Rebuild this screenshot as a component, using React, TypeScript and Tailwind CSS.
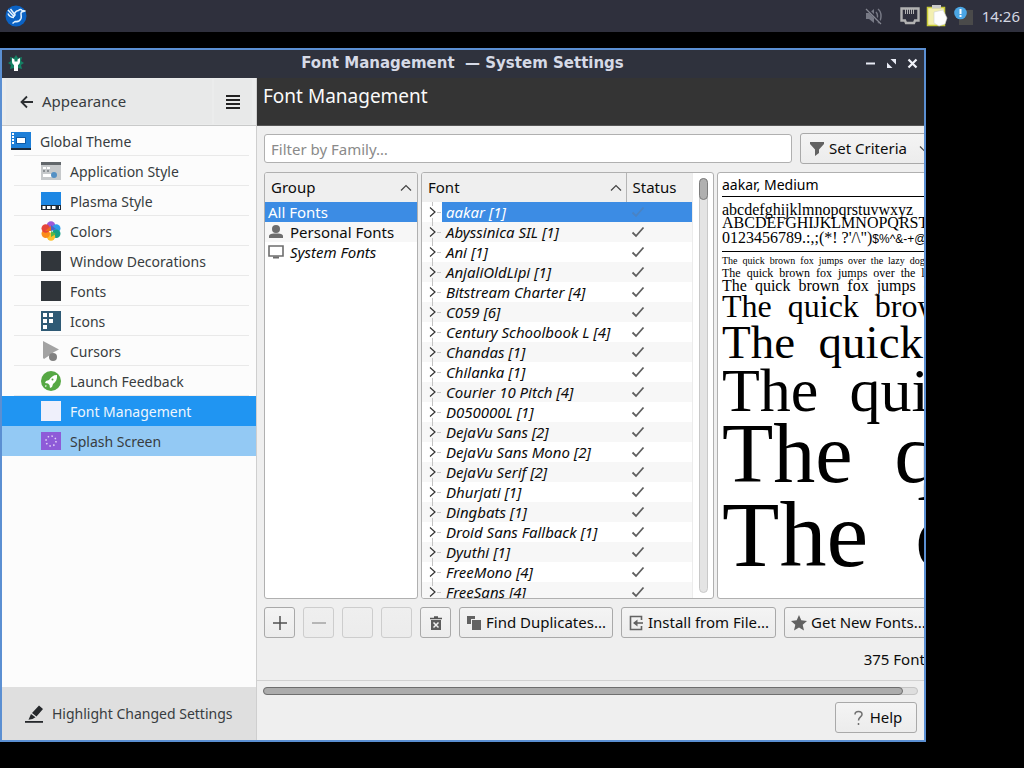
import React from "react";
import clsx from "clsx";

type IconName =
  | "theme"
  | "appstyle"
  | "plasma"
  | "colors"
  | "dark"
  | "icons"
  | "cursors"
  | "launch"
  | "light"
  | "splash";

interface NavItem {
  label: string;
  icon: IconName;
  state?: "active" | "hover";
}

const navItems: NavItem[] = [
  { label: "Application Style", icon: "appstyle" },
  { label: "Plasma Style", icon: "plasma" },
  { label: "Colors", icon: "colors" },
  { label: "Window Decorations", icon: "dark" },
  { label: "Fonts", icon: "dark" },
  { label: "Icons", icon: "icons" },
  { label: "Cursors", icon: "cursors" },
  { label: "Launch Feedback", icon: "launch" },
  { label: "Font Management", icon: "light", state: "active" },
  { label: "Splash Screen", icon: "splash", state: "hover" },
];

const fonts = [
  "aakar [1]",
  "Abyssinica SIL [1]",
  "Ani [1]",
  "AnjaliOldLipi [1]",
  "Bitstream Charter [4]",
  "C059 [6]",
  "Century Schoolbook L [4]",
  "Chandas [1]",
  "Chilanka [1]",
  "Courier 10 Pitch [4]",
  "D050000L [1]",
  "DejaVu Sans [2]",
  "DejaVu Sans Mono [2]",
  "DejaVu Serif [2]",
  "Dhurjati [1]",
  "Dingbats [1]",
  "Droid Sans Fallback [1]",
  "Dyuthi [1]",
  "FreeMono [4]",
  "FreeSans [4]",
];

const pangram = "The  quick  brown  fox  jumps  over  the  lazy  dog";

const samples = [
  "text-[10px] leading-[12px]",
  "text-[12px] leading-[12px]",
  "text-[16px] leading-[14px]",
  "text-[32px] leading-[26px]",
  "text-[47px] leading-[46px]",
  "text-[62px] leading-[50px]",
  "text-[84px] leading-[78px]",
  "text-[94px] leading-[82px]",
];

const NavIcon: React.FC<{ name: IconName }> = ({ name }) => (
  <svg viewBox="0 0 20 20" className="size-5 shrink-0" aria-hidden="true">
    {name === "theme" && (
      <>
        <path fill="#1d7fd8" d="M0 1h20v18H0z" />
        <path fill="#1b2b3d" d="M0 17h20v2H0z" />
        <path fill="#fff" d="M1 2h2v2H1zM1 5h2v2H1zM1 8h2v2H1zM1 11h2v2H1zM6 7h8v5H6z" />
        <path fill="none" stroke="#0f5ba5" d="M5.500 6.500h9v6h-9z" />
      </>
    )}
    {name === "appstyle" && (
      <>
        <path fill="#c6c9cb" d="M0 1h20v18H0z" />
        <path fill="#62676b" d="M0 1h20v3H0z" />
        <path fill="#fff" d="M2 6h3v2H2zM6 6h3v2H6zM2 13h9v3H2z" />
        <path fill="#8b9094" d="M2 9h2v2H2zM6 9h2v2H6z" />
        <circle cx="13" cy="14" r="3" fill="#5490c4" />
      </>
    )}
    {name === "plasma" && (
      <>
        <path fill="#1d87e4" d="M0 1h20v14H0z" />
        <path fill="#1f2c3a" d="M0 14h20v5H0z" />
        <path fill="#fff" d="M1.500 15h3v3h-3zM6 15h3.500v3H6zM11 15h3.500v3H11zM18 15h1v3h-1z" />
      </>
    )}
    {name === "colors" && (
      <>
        <circle cx="10" cy="4.500" r="4.200" fill="#9b59d6" />
        <circle cx="15.300" cy="7.500" r="4.200" fill="#2f9ce8" />
        <circle cx="15.300" cy="12.800" r="4.200" fill="#16a085" />
        <circle cx="10" cy="15.600" r="4.200" fill="#fbc02d" />
        <circle cx="4.700" cy="12.800" r="4.200" fill="#fb8c1a" />
        <circle cx="4.700" cy="7.500" r="4.200" fill="#e6453a" />
        <path fill="#ee6a1f" d="M4 10l6-5v5z" />
        <path fill="#4d64c8" d="M10 4l5 4-5 2z" />
        <path fill="#57b947" d="M10 10l5 3-5 3z" />
      </>
    )}
    {name === "dark" && <path fill="#31363b" d="M0 0h20v20H0z" />}
    {name === "light" && <path fill="#eff0fb" d="M0 0h20v20H0z" />}
    {name === "icons" && (
      <>
        <path fill="#2f5a75" d="M0 0h20v20H0z" />
        <path fill="#fff" d="M2 2h4v4H2zM8 2h4v4H8zM2 8h4v4H2zM8 8h4v4H8zM2 14h4v4H2z" />
      </>
    )}
    {name === "cursors" && (
      <>
        <path fill="#a3a3a3" d="M2 0l16 8.500-2 1-3 1.500-4 3-6 4-1-1z" />
        <circle cx="12" cy="16" r="4" fill="#808080" />
      </>
    )}
    {name === "launch" && (
      <>
        <circle cx="10" cy="10" r="10" fill="#56a844" />
        <path fill="#fff" d="M16 4c-4 0-6 2-8 5l-3 1-1 2 3 .5 1.500 1.500.5 3 2-1 1-3c3-2 4.500-5 4-9z" />
        <circle cx="11.500" cy="8.500" r="1" fill="#56a844" />
        <path fill="#fff" d="M4.500 14l1.500 1-2 1z" />
      </>
    )}
    {name === "splash" && (
      <>
        <path fill="#8e5bd8" d="M0 1h20v18H0z" />
        <circle cx="10" cy="10" r="5" fill="none" stroke="#e2d3f7" strokeWidth="1.500" strokeDasharray="1.500 2.400" />
      </>
    )}
  </svg>
);

const Check: React.FC<{ faded?: boolean }> = ({ faded }) => (
  <svg viewBox="0 0 14 12" className="h-3 w-3.5" aria-label="Enabled">
    <path d="M1.500 6.500L5 10l7.500-8.500" fill="none" stroke={faded ? "#4a83c4" : "#5f5f5f"} strokeWidth="1.800" />
  </svg>
);

const SortArrow: React.FC = () => (
  <svg viewBox="0 0 12 8" className="h-2 w-3" aria-hidden="true">
    <path d="M1 6.500l5-5 5 5" fill="none" stroke="#444" strokeWidth="1.200" />
  </svg>
);

interface ToolButtonProps extends React.ButtonHTMLAttributes<HTMLButtonElement> {
  children?: React.ReactNode;
}

const ToolButton: React.FC<ToolButtonProps> = ({ children, className, ...rest }) => (
  <button
    type="button"
    className={clsx(
      "flex h-[31px] shrink-0 items-center rounded-[3px] border border-[#a9a9a9] bg-gradient-to-b from-[#f4f4f4] to-[#ececec] whitespace-nowrap disabled:border-[#cdcdcd] disabled:from-[#efefef]",
      className
    )}
    {...rest}
  >
    {children}
  </button>
);

const Taskbar: React.FC = () => (
  <header className="flex h-8 shrink-0 items-center justify-between bg-[#2f303d] pr-1 pl-[5px]">
    <button type="button" aria-label="Application menu">
      <svg viewBox="0 0 22 22" className="size-[22px]">
        <circle cx="11" cy="11" r="10.500" fill="#0b62c4" />
        <path
          d="M3 5l6 6.500M5.500 4l5 6.500M3 8.500c1 2.500 3 4 6 4M9 12c0-4 1.500-6 4.500-6.500 1.500-1.500 3-1 3.500 0l3 .5-3.500 1c-1.500 2 .5 3.500-.5 6.500-1 2.500-3 3.500-6 3l-2.500 2"
          fill="none"
          stroke="#e3f2ff"
          strokeWidth="1.500"
          strokeLinejoin="round"
        />
      </svg>
    </button>
    <div className="flex items-center">
      <svg viewBox="0 0 18 18" className="mr-[17px] size-[18px]" aria-label="Muted">
        <path d="M1 6h3l5-4v14l-5-4H1z" fill="#777985" />
        <path d="M11 5c2 2 2 6 0 8M13 2c4 3 4 11 0 14" fill="none" stroke="#777985" strokeWidth="1.500" />
        <path d="M1 1l16 16" stroke="#2f303d" strokeWidth="2.500" />
        <path d="M1 2l15 15" stroke="#858792" strokeWidth="1.300" />
      </svg>
      <svg viewBox="0 0 20 18" className="mr-1.5 h-[18px] w-5" aria-label="Network">
        <path d="M1.500 1.500h17v12h-3.500l-1 2.500H6l-1-2.500H1.500z" fill="none" stroke="#b2b2b2" strokeWidth="2.400" />
        <path d="M5.500 2v5M7.500 2v5M9.500 2v5M11.500 2v5M13.500 2v5" stroke="#b2b2b2" />
      </svg>
      <svg viewBox="0 0 22 22" className="mr-1.5 size-[22px]" aria-label="Clipboard">
        <path d="M1.500 2.500h17v18h-17z" fill="#f3efb0" stroke="#c9cc38" strokeWidth="1.500" />
        <path d="M6 0h9v3.500H6z" fill="#c9c9c9" />
        <path d="M8 7l9-2 4 8-2 6-6 2-5-3z" fill="#fdfdfd" stroke="#d0d0d0" strokeWidth=".6" />
      </svg>
      <svg viewBox="0 0 20 20" className="mr-2 size-5" aria-label="Notifications">
        <path d="M7 4h12v15H5V13z" fill="#4a4a4a" />
        <circle cx="6.500" cy="7" r="6.300" fill="#4ba6e4" />
        <path d="M5.500 3h2v5h-2zM5.500 9h2v2h-2z" fill="#fff" />
      </svg>
      <time className="text-[15px] text-[#d4d7e2]">14:26</time>
    </div>
  </header>
);

const TitleBar: React.FC = () => (
  <div className="flex h-7 shrink-0 items-center bg-[#2f323d] px-[5px] pb-0.5 text-[#d6dae6]">
    <svg viewBox="0 0 18 18" className="size-[18px]" aria-hidden="true">
      <path d="M9 1l2 3 4-1-1 4 3 2-3 2 1 4-4-1-2 3-2-3-4 1 1-4-3-2 3-2-1-4 4 1z" fill="#158064" />
      <path d="M5 4v3.500c0 2 1 3 2 3.500v6h4v-6c1-.5 2-1.500 2-3.500V4l-2.500 1.500v2h-3v-2z" fill="#fff" />
    </svg>
    <h1 className="flex-1 pl-9 text-center font-['DejaVu_Sans',sans-serif] text-[15px] font-bold whitespace-pre">
      {"Font Management  — System Settings"}
    </h1>
    <div className="flex items-center gap-2">
      <button type="button" aria-label="Minimize">
        <svg viewBox="0 0 13 13" className="size-[13px]">
          <path d="M2 6.500h9" stroke="#e8ebf5" strokeWidth="2" />
        </svg>
      </button>
      <button type="button" aria-label="Restore">
        <svg viewBox="0 0 13 13" className="size-[13px]">
          <path d="M5.500 2H11v5.500zM2 5.500V11h5.500z" fill="#e8ebf5" />
          <path d="M2 2l9 9" stroke="#2f323d" />
        </svg>
      </button>
      <button type="button" aria-label="Close">
        <svg viewBox="0 0 13 13" className="size-[13px]">
          <path d="M2.500 2.500l8 8M10.500 2.500l-8 8" stroke="#f1f3fa" strokeWidth="2.200" />
        </svg>
      </button>
    </div>
  </div>
);

const Sidebar: React.FC = () => (
  <aside className="flex w-[255px] shrink-0 flex-col border-r border-[#cfcfcf] bg-[#fcfcfc] text-[#383c40]">
    <div className="flex h-12 shrink-0 border-b border-[#c9caca] bg-[#ebecec]">
      <button type="button" className="my-px ml-1 flex flex-1 items-center gap-2 bg-[#e8e9e9] pl-3.5 text-[15px]">
        <svg viewBox="0 0 14 14" className="size-3.5" aria-hidden="true">
          <path d="M7 1.500L1.500 7 7 12.500M1.500 7H13" fill="none" stroke="#2c2f32" strokeWidth="1.800" />
        </svg>
        Appearance
      </button>
      <button type="button" aria-label="Menu" className="my-px mr-1 ml-0.5 flex w-[38px] items-center justify-center bg-[#e8e9e9]">
        <svg viewBox="0 0 14 14" className="size-3.5">
          <path d="M0 1h14M0 5h14M0 9h14M0 13h14" stroke="#222" strokeWidth="1.800" />
        </svg>
      </button>
    </div>
    <nav className="flex-1">
      <button type="button" className="relative flex h-[30px] w-full items-center gap-[9px] pl-[9px] after:absolute after:right-[7px] after:bottom-0 after:left-3 after:h-px after:bg-[#e9e9e9]">
        <NavIcon name="theme" />
        Global Theme
      </button>
      <ul>
        {navItems.map((item) => (
          <li key={item.label}>
            <button
              type="button"
              className={clsx(
                "relative flex h-[30px] w-full items-center gap-[9px] pl-[39px]",
                item.state === "active" && "bg-[#2095f2] text-[#eef6fd]",
                item.state === "hover" && "bg-[#93c9f4]",
                !item.state &&
                  "after:absolute after:right-[7px] after:bottom-0 after:left-3 after:h-px after:bg-[#e9e9e9]"
              )}
            >
              <NavIcon name={item.icon} />
              {item.label}
            </button>
          </li>
        ))}
      </ul>
    </nav>
    <button type="button" className="flex h-[53px] shrink-0 items-center gap-2 bg-[#dfdfdf] pl-[22px]">
      <svg viewBox="0 0 20 20" className="size-5" aria-hidden="true">
        <path d="M1 17h18v1.800H1z" fill="#26292c" />
        <path d="M15 1.500l4 3.500-6.500 7.500-4.500-3.500zM7 10l4.500 3.200-3 1.800-4 .8z" fill="#26292c" />
      </svg>
      Highlight Changed Settings
    </button>
  </aside>
);

const GroupList: React.FC = () => (
  <section className="flex w-[154px] shrink-0 flex-col overflow-hidden rounded-[3px] border border-[#b0b0b0] bg-white">
    <button type="button" className="flex h-[29px] shrink-0 items-center justify-between bg-[#efefef] pr-[5px] pl-1.5">
      Group
      <SortArrow />
    </button>
    <ul className="leading-5">
      <li className="bg-[#3c8ce4] pl-[3px] text-white">All Fonts</li>
      <li className="flex items-center gap-1.5 bg-[#f7f7f7] pl-[3px]">
        <svg viewBox="0 0 16 16" className="size-4" aria-hidden="true">
          <circle cx="8" cy="5" r="4" fill="#6d6d6d" />
          <path d="M1 14v-2c0-1.500 2-2.500 5-2.500h4c3 0 5 1 5 2.500v2z" fill="#6d6d6d" />
        </svg>
        Personal Fonts
      </li>
      <li className="flex items-center gap-1.5 pl-[3px] italic">
        <svg viewBox="0 0 16 16" className="size-4" aria-hidden="true">
          <path d="M1 2h14v10H1z" fill="none" stroke="#6d6d6d" strokeWidth="1.600" />
          <path d="M5 12.500h6v2H5z" fill="#6d6d6d" />
        </svg>
        System Fonts
      </li>
    </ul>
  </section>
);

const FontTable: React.FC = () => (
  <section className="flex w-[293px] shrink-0 overflow-hidden rounded-[3px] border border-[#b0b0b0] bg-white">
    <div className="min-w-0 flex-1 overflow-hidden">
      <table className="w-full table-fixed border-collapse">
        <thead>
          <tr className="h-[29px] bg-[#efefef]">
            <th scope="col" className="border-r border-[#b5b5b5] p-0 font-normal">
              <div className="flex items-center justify-between pr-1 pl-1.5">
                Font
                <SortArrow />
              </div>
            </th>
            <th scope="col" className="w-[66px] p-0 pl-1.5 text-left font-normal">
              Status
            </th>
          </tr>
        </thead>
        <tbody>
          {fonts.map((font, index) => (
            <tr key={font} className={clsx("h-5", index % 2 === 1 && "bg-[#f7f7f7]")}>
              <td className="p-0">
                <div className="flex h-5 items-center">
                  <svg viewBox="0 0 20 20" className="size-5 shrink-0" aria-hidden="true">
                    <path d="M10.500 0v4M10.500 16v4M15 10.500h4" stroke="#c4c4c4" />
                    <path d="M8 5.500l5 4.500-5 4.500" fill="none" stroke="#333" strokeWidth="1.200" />
                  </svg>
                  <span
                    className={clsx(
                      "h-5 flex-1 pl-1 leading-5 whitespace-nowrap italic",
                      index === 0 && "bg-[#3c8ce4] text-white"
                    )}
                  >
                    {font}
                  </span>
                </div>
              </td>
              <td className={clsx("p-0 pl-[5px]", index === 0 && "bg-[#3c8ce4]")}>
                <Check faded={index === 0} />
              </td>
            </tr>
          ))}
        </tbody>
      </table>
    </div>
    <div className="flex w-[21px] justify-center border-l border-[#ececec] py-[5px]">
      <div className="w-[9px] rounded-full border border-[#c9c9c9] bg-[#e4e4e4]">
        <div className="-mx-px -mt-px h-[22px] rounded-full border border-[#7d7d7d] bg-[#b0b0b0]" />
      </div>
    </div>
  </section>
);

const Preview: React.FC = () => (
  <section className="min-w-0 flex-1 overflow-hidden rounded-[3px] border border-[#b0b0b0] bg-white pl-1 text-black">
    <p className="border-b border-black text-[14px] leading-[23px]">aakar, Medium</p>
    <div className="border-b border-black pt-1.5 pb-[3px] font-['Liberation_Serif',serif] text-[16px] leading-[13px] whitespace-pre">
      <p>abcdefghijklmnopqrstuvwxyz</p>
      <p>ABCDEFGHIJKLMNOPQRSTUVWXYZ</p>
      <p className="leading-[17px]">
        {"0123456789.:,;(*! ?'/\\\")"}
        <span className="font-['Liberation_Sans',sans-serif] text-[12px]">{"$%^&-+@~#<>{}[]"}</span>
      </p>
    </div>
    <div className="pt-[3px] font-['Liberation_Serif',serif] whitespace-pre">
      {samples.map((size) => (
        <p key={size} className={size}>
          {pangram}
        </p>
      ))}
    </div>
  </section>
);

const MainPanel: React.FC = () => (
  <main className="flex min-w-0 flex-1 flex-col overflow-hidden bg-[#efefef] text-[15px] text-[#0c0c0c]">
    <h2 className="h-12 shrink-0 border-b border-[#555] bg-[#343434] px-1.5 text-[19px] leading-9 text-[#fafafa]">
      Font Management
    </h2>
    <div className="-mr-5 flex min-h-0 flex-1 flex-col gap-2 pt-[7px] pr-2 pl-[7px]">
      <div className="flex items-center gap-2">
        <input
          type="text"
          aria-label="Filter by family"
          placeholder="Filter by Family…"
          className="h-[29px] min-w-0 flex-1 rounded-[3px] border border-[#b0b0b0] bg-white px-1.5 placeholder:text-[#8a8a8a]"
        />
        <ToolButton className="w-[136px] gap-1 pl-2">
          <svg viewBox="0 0 16 16" className="size-4" aria-hidden="true">
            <path d="M1 1h14v2l-5 5.500V12l-4 3V8.500L1 3z" fill="#626262" />
          </svg>
          <span className="flex-1 text-left">Set Criteria</span>
          <svg viewBox="0 0 12 8" className="mr-1 h-2 w-3" aria-hidden="true">
            <path d="M1 1.500l5 5 5-5" fill="none" stroke="#444" strokeWidth="1.200" />
          </svg>
        </ToolButton>
      </div>
      <div className="flex min-h-0 flex-1 gap-[3px]">
        <GroupList />
        <FontTable />
        <Preview />
      </div>
      <div className="flex gap-2">
        <ToolButton aria-label="Create group" className="w-[31px] justify-center">
          <svg viewBox="0 0 16 16" className="size-4">
            <path d="M8 1v14M1 8h14" stroke="#505050" strokeWidth="1.500" />
          </svg>
        </ToolButton>
        <ToolButton aria-label="Remove group" disabled className="w-[31px] justify-center">
          <svg viewBox="0 0 16 16" className="size-4">
            <path d="M1 8h14" stroke="#a3a3a3" strokeWidth="1.500" />
          </svg>
        </ToolButton>
        <ToolButton aria-label="Enable" disabled className="w-[31px]" />
        <ToolButton aria-label="Disable" disabled className="w-[31px]" />
        <ToolButton aria-label="Delete font" className="w-[31px] justify-center">
          <svg viewBox="0 0 16 16" className="size-4">
            <path d="M2 3.500h12M6 2h4" stroke="#555" strokeWidth="1.600" />
            <path d="M3 5h10v10H3z" fill="#5c5c5c" />
            <path d="M5.500 7.500l5 5M10.500 7.500l-5 5" stroke="#f0f0f0" strokeWidth="1.500" />
          </svg>
        </ToolButton>
        <ToolButton className="w-[154px] justify-center gap-1">
          <svg viewBox="0 0 16 16" className="size-4" aria-hidden="true">
            <path d="M1 1h8v3H5v5H1zM6 5h9v10H6z" fill="#626262" />
          </svg>
          Find Duplicates...
        </ToolButton>
        <ToolButton className="w-[155px] justify-center gap-1">
          <svg viewBox="0 0 16 16" className="size-4" aria-hidden="true">
            <path d="M13.500 5V1.500h-11v13h11V11" fill="none" stroke="#626262" strokeWidth="1.600" />
            <path d="M6 8h9" stroke="#626262" strokeWidth="1.600" />
            <path d="M9.500 4.500v7L5 8z" fill="#626262" />
          </svg>
          Install from File...
        </ToolButton>
        <ToolButton className="w-[151px] gap-1 pl-1.5">
          <svg viewBox="0 0 16 16" className="size-4" aria-hidden="true">
            <path d="M8 0l2.300 5.300 5.700.6-4.300 3.800 1.300 5.800L8 12.500l-5 3 1.300-5.800L0 5.900l5.700-.6z" fill="#626262" />
          </svg>
          Get New Fonts...
        </ToolButton>
      </div>
    </div>
    <p className="-mr-5 flex h-[43px] shrink-0 items-center justify-end border-b border-[#d2d2d2] pr-3">375 Fonts</p>
    <div className="shrink-0 px-1.5 pt-1.5">
      <div className="h-2 rounded-full border border-[#c4c4c4] bg-[#dedede]">
        <div className="-mt-px -ml-px h-2 w-[98%] rounded-full border border-[#6f6f6f] bg-[#acacac]" />
      </div>
    </div>
    <div className="flex shrink-0 justify-end px-[7px] py-[7px]">
      <ToolButton className="w-[82px] justify-center gap-1">
        <svg viewBox="0 0 16 16" className="size-4" aria-hidden="true">
          <path d="M5 4.500c0-4 7-4 7 0C12 7 8.500 7 8.500 10.500M8.500 13v2" fill="none" stroke="#707070" strokeWidth="1.500" />
        </svg>
        Help
      </ToolButton>
    </div>
  </main>
);

const App: React.FC = () => {
  return (
    <div className="flex h-screen flex-col overflow-hidden bg-black font-['Noto_Sans',sans-serif] text-[14px]">
      <Taskbar />
      <div className="mt-4 mr-[98px] mb-[26px] flex min-h-0 flex-1 flex-col overflow-hidden border-2 border-[#5b8fd2]">
        <TitleBar />
        <div className="flex min-h-0 flex-1">
          <Sidebar />
          <MainPanel />
        </div>
      </div>
    </div>
  );
};

export default App;
